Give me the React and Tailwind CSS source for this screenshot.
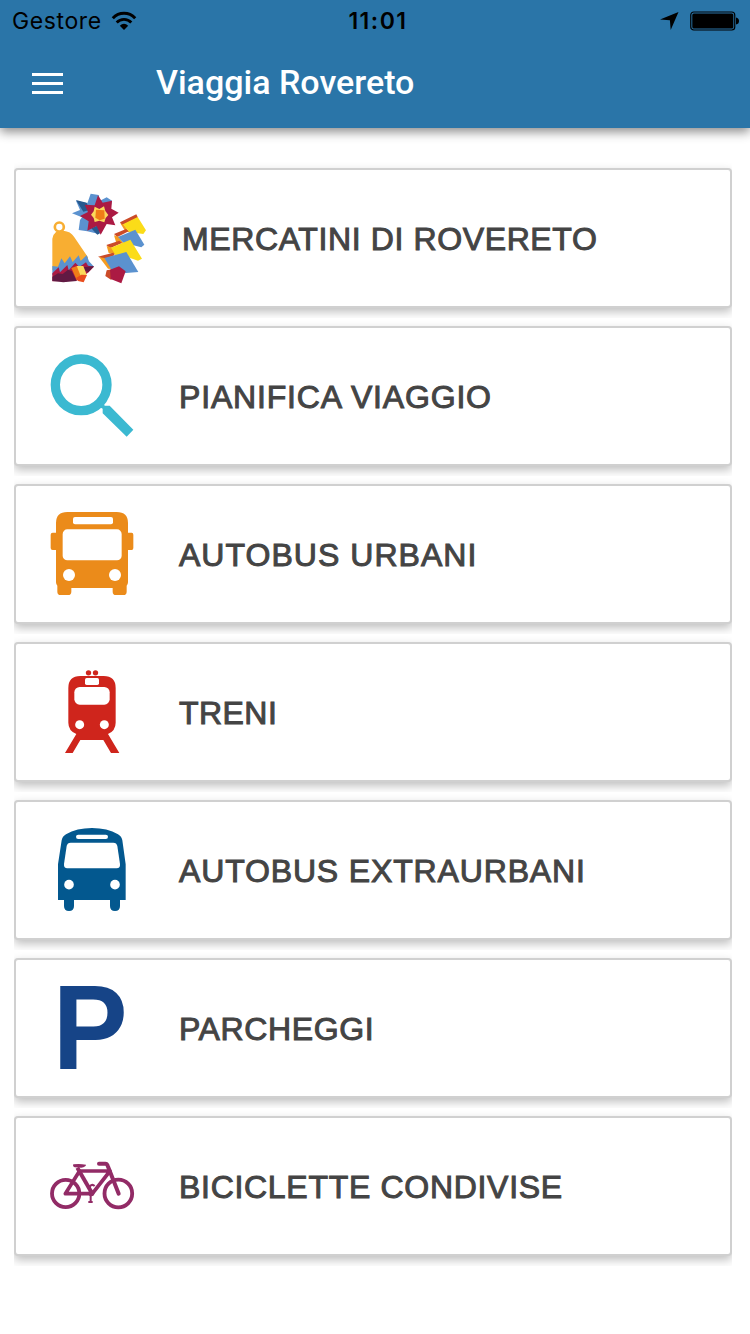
import React from "react";

function Icon({ viewBox, children }) {
  return (
    <svg className="h-[136px] w-[120px] shrink-0" viewBox={viewBox} aria-hidden="true">
      {children}
    </svg>
  );
}

function MarketIcon() {
  return (
    <Icon viewBox="90 30 360 408">
      {/* star */}
      <path fill="#5b92cf" d="M272 101L296 105L300 122L320 112L336 122L330 150L300 200L296 222L262 214L236 210L240 180L246 172L216 160L240 150L228 122L262 130Z" />
      <path fill="#27598f" d="M228 120L260 128L268 150L250 155ZM274 205L296 196L300 220L292 224Z" />
      <path fill="#ab1a43" d="M294 106L308 128L336 122L334 146L356 158L336 172L346 196L320 192L302 224L290 198L262 212L266 184L240 168L264 156L254 134L284 136Z" />
      <path fill="#fbd95b" d="M284 140L298 147L312 139L316 153L325 165L317 174L313 187L298 182L284 186L281 174L273 164L281 154Z" />
      <path fill="#f07d17" d="M288 149L313 151L314 176L299 181L286 173Z" />
      {/* bell */}
      <circle cx="178" cy="201" r="13.5" fill="none" stroke="#f8ae32" strokeWidth="8" />
      <path fill="#f8ae32" d="M157 236Q160 222 168 216L190 212Q212 214 222 230L264 292L262 310L157 330Z" />
      <path fill="#5b92cf" d="M157 318L174 320L184 295L194 310L210 289L218 306L236 286L242 303L260 286L267 304L282 320L260 334L157 346Z" />
      <path fill="#ab1a43" d="M157 340L176 322L180 337L202 315L206 331L226 308L238 321L258 307L264 317L282 320L264 338L230 362L157 364Z" />
      <path fill="#611a43" d="M157 350L174 340L188 342L204 329L215 333L230 363L190 367L157 363ZM250 322L282 318L265 337L252 330Z" />
      <path fill="#f07d17" d="M214 324L231 318L246 350L230 360Z" />
      <path fill="#fbd95b" d="M230 318L250 318L260 344L243 350Z" />
      <path fill="#ea4d1d" d="M228 354L244 344L261 345L251 367L234 363Z" />
      {/* stacked cubes */}
      <path fill="#cb4b28" d="M360 187L409 163L414 173L366 196Z" />
      <path fill="#f59c20" d="M361 190L372 195L390 218L374 211Z" />
      <path fill="#fbdc18" d="M369 193L413 171L438 211L430 222L388 216Z" />
      <path fill="#cb4b28" d="M342 222L378 207L386 214L352 231Z" />
      <path fill="#f59c20" d="M342 226L356 230L372 252L348 246Z" />
      <path fill="#5b92cf" d="M354 231L406 209L433 254L424 262L370 248Z" />
      <path fill="#cb4b28" d="M319 255L358 242L366 249L330 265Z" />
      <path fill="#f59c20" d="M320 258L338 263L352 286L326 279Z" />
      <path fill="#fbdc18" d="M333 263L391 239L426 296L414 302L380 290L346 284Z" />
      <path fill="#cb4b28" d="M294 290L340 278L344 286L312 298Z" />
      <path fill="#f59c20" d="M298 292L314 294L344 328L324 326Z" />
      <path fill="#5b92cf" d="M313 294L379 276L415 336L342 342Z" />
      <path fill="#cb4b28" d="M320 331L336 328L334 360L316 348Z" />
      <path fill="#ab1a43" d="M330 329L357 319L377 334L364 370L332 357Z" />
    </Icon>
  );
}

function SearchIcon() {
  return (
    <Icon viewBox="0 -21 360 408">
      <circle cx="153.500" cy="149.500" r="77.500" fill="none" stroke="#3bb9d1" strokeWidth="28" />
      <path fill="#3bb9d1" d="M205 212L219 201L224 212H239L310 284L290 305L218 235V221L210 217Z" />
    </Icon>
  );
}

function CityBusIcon() {
  return (
    <Icon viewBox="0 -27 360 408">
      <path fill="#eb8b1a" d="M78 84Q78 51 112 51H260Q294 51 294 84V113H305Q310 113 310 119V159Q310 165 305 165H294V262Q294 267 290 272V290Q290 300 280 300H258Q248 300 248 290V279H124V290Q124 300 114 300H92Q82 300 82 290V272Q78 267 78 262V165H68Q62 165 62 159V119Q62 113 68 113H78Z" />
      <rect x="129" y="66" width="120" height="22" rx="6" fill="#fff" />
      <rect x="98" y="103" width="177" height="93" rx="14" fill="#fff" />
      <circle cx="117" cy="240" r="18" fill="#fff" />
      <circle cx="255" cy="240" r="18" fill="#fff" />
    </Icon>
  );
}

function TrainIcon() {
  return (
    <Icon viewBox="0 -33 360 408">
      <g fill="#cf251c">
        <circle cx="175.500" cy="53.500" r="8" />
        <circle cx="196.500" cy="53.500" r="8" />
        <path d="M115 99Q115 63 151 63H221Q257 63 257 99V203Q257 227 234 237L268 294H243L220 255H151L128 294H105L139 237Q115 227 115 203Z" />
      </g>
      <rect x="165" y="69" width="42" height="21" rx="5" fill="#fff" />
      <rect x="133" y="96" width="106" height="53" rx="16" fill="#fff" />
      <circle cx="149" cy="209" r="13.500" fill="#fff" />
      <circle cx="223" cy="209" r="13.500" fill="#fff" />
    </Icon>
  );
}

function CoachIcon() {
  return (
    <Icon viewBox="0 -24 360 408">
      <path fill="#03588f" d="M84 270V163L95 91Q97 79 108 73Q140 54 186 54Q232 54 264 73Q275 79 277 91L287 163V270H270V288Q270 303 255 303Q240 303 240 288V270H132V288Q132 303 117 303Q102 303 102 288V270Z" />
      <rect x="138" y="74" width="96" height="13" rx="6.500" fill="#fff" />
      <path fill="#fff" d="M122 98H250Q260 98 262 108L270 162Q271 175 260 175H112Q101 175 102 162L110 108Q112 98 122 98Z" />
      <circle cx="117" cy="224" r="14.500" fill="#fff" />
      <circle cx="255" cy="224" r="14.500" fill="#fff" />
    </Icon>
  );
}

function ParkingIcon() {
  return (
    <Icon viewBox="0 -30 360 408">
      <text transform="translate(68.500 296) scale(.935 1)" fill="#164487" className="font-['Liberation_Sans',Arial,sans-serif] text-[360px] font-bold">
        P
      </text>
    </Icon>
  );
}

function BikeIcon() {
  return (
    <Icon viewBox="0 -66 360 408">
      <g fill="none" stroke="#922b66">
        <circle cx="107" cy="160.500" r="41" strokeWidth="11.500" />
        <circle cx="265" cy="160.500" r="41.500" strokeWidth="11.500" />
        <g strokeWidth="11" strokeLinejoin="round">
          <path d="M145 93H240L187 161H106L150 91" />
          <path d="M142 83L187 161" strokeWidth="12" />
          <path d="M207 71H226Q231 71 233 77L266 161" strokeWidth="12" strokeLinecap="round" />
        </g>
        <path d="M180 146V138Q187 131 194 138M182 150V186M175 186H188" strokeWidth="6" />
      </g>
      <path fill="#922b66" d="M130 73Q148 70 168 74Q168 80 154 83L134 82Q127 79 130 73Z" />
      <circle cx="184" cy="160" r="9" fill="#922b66" />
    </Icon>
  );
}

const items = [
  { label: "MERCATINI DI ROVERETO", icon: MarketIcon, spacing: "ml-[32px] tracking-[0.62px]" },
  { label: "PIANIFICA VIAGGIO", icon: SearchIcon, spacing: "ml-[29px] tracking-[0.83px]" },
  { label: "AUTOBUS URBANI", icon: CityBusIcon, spacing: "ml-[29px] tracking-[1.03px]" },
  { label: "TRENI", icon: TrainIcon, spacing: "ml-[29px] tracking-[0.45px]" },
  { label: "AUTOBUS EXTRAURBANI", icon: CoachIcon, spacing: "ml-[29px] tracking-[0.85px]" },
  { label: "PARCHEGGI", icon: ParkingIcon, spacing: "ml-[29px] tracking-[0.62px]" },
  { label: "BICICLETTE CONDIVISE", icon: BikeIcon, spacing: "ml-[29px] tracking-[0.7px]" },
];

function StatusBar() {
  return (
    <div className="grid h-[42px] grid-cols-3 items-center pl-[12px] pr-[11px] font-[Inter,sans-serif] text-black">
      <div className="flex items-center">
        <span className="text-[23px] leading-10 tracking-[0.6px]">Gestore</span>
        <svg className="-mt-px ml-[9px] h-[20px] w-[26px]" viewBox="0 0 26 20" fill="none" stroke="#000">
          <path d="M1.800 7.200C8 .7 18 .7 24.200 7.200" strokeWidth="3" />
          <path d="M5.700 11.500C9.700 7.300 16.300 7.300 20.300 11.500" strokeWidth="2.800" />
          <path d="M8.800 14.800Q13 10.900 17.200 14.800L13 19Z" fill="#000" stroke="none" />
        </svg>
      </div>
      <div className="pl-[5px] text-center text-[23px] font-semibold leading-10 tracking-[1.5px]">11:01</div>
      <div className="-mt-px flex items-center justify-end">
        <svg className="h-[18px] w-[19px]" viewBox="0 0 19 18">
          <path d="M18.500 0L10.700 18L9.900 8.300L0 7.600Z" />
        </svg>
        <svg className="-mr-px ml-[11px] h-[20px] w-[50px]" viewBox="0 0 50 20">
          <rect x=".75" y="1" width="44" height="18" rx="3" fill="none" stroke="#000" strokeWidth="1.200" />
          <rect x="2.300" y="2.500" width="41" height="15" rx="1.500" />
          <path d="M46 6.500Q49 7 49 10T46 13.500Z" />
        </svg>
      </div>
    </div>
  );
}

export default function App() {
  return (
    <div className="h-[1334px] w-[750px] overflow-hidden bg-white">
      <header className="relative h-32 bg-[#2a75a8] shadow-[0_4px_10px_rgba(0,0,0,0.45)]">
        <StatusBar />
        <div className="flex h-[82px] items-center pl-8">
          <button className="flex w-[31px] flex-col gap-[6px]" aria-label="Menu">
            <span className="h-[3px] bg-white" />
            <span className="h-[3px] bg-white" />
            <span className="h-[3px] bg-white" />
          </button>
          <h1 className="ml-[93px] pb-[2px] font-[Roboto,sans-serif] text-[34px] font-medium leading-10 text-white">
            Viaggia Rovereto
          </h1>
        </div>
      </header>
      <main className="ml-[14px] w-[718px] pt-8">
        {items.map(({ label, icon: Glyph, spacing }) => (
          <div key={label} className="overflow-hidden pt-2 pb-[10px]">
            <button className="flex h-[140px] w-full items-center rounded-[4px] border-2 border-[#d0d0d0] bg-white pl-[14px] shadow-[0_4px_10px_rgba(0,0,0,0.25)]">
              <Glyph />
              <span
                className={`${spacing} whitespace-nowrap pt-[2px] font-['Liberation_Sans',Arial,sans-serif] text-[32px] leading-10 text-[#444] [-webkit-text-stroke:1px_#444]`}
              >
                {label}
              </span>
            </button>
          </div>
        ))}
      </main>
    </div>
  );
}
